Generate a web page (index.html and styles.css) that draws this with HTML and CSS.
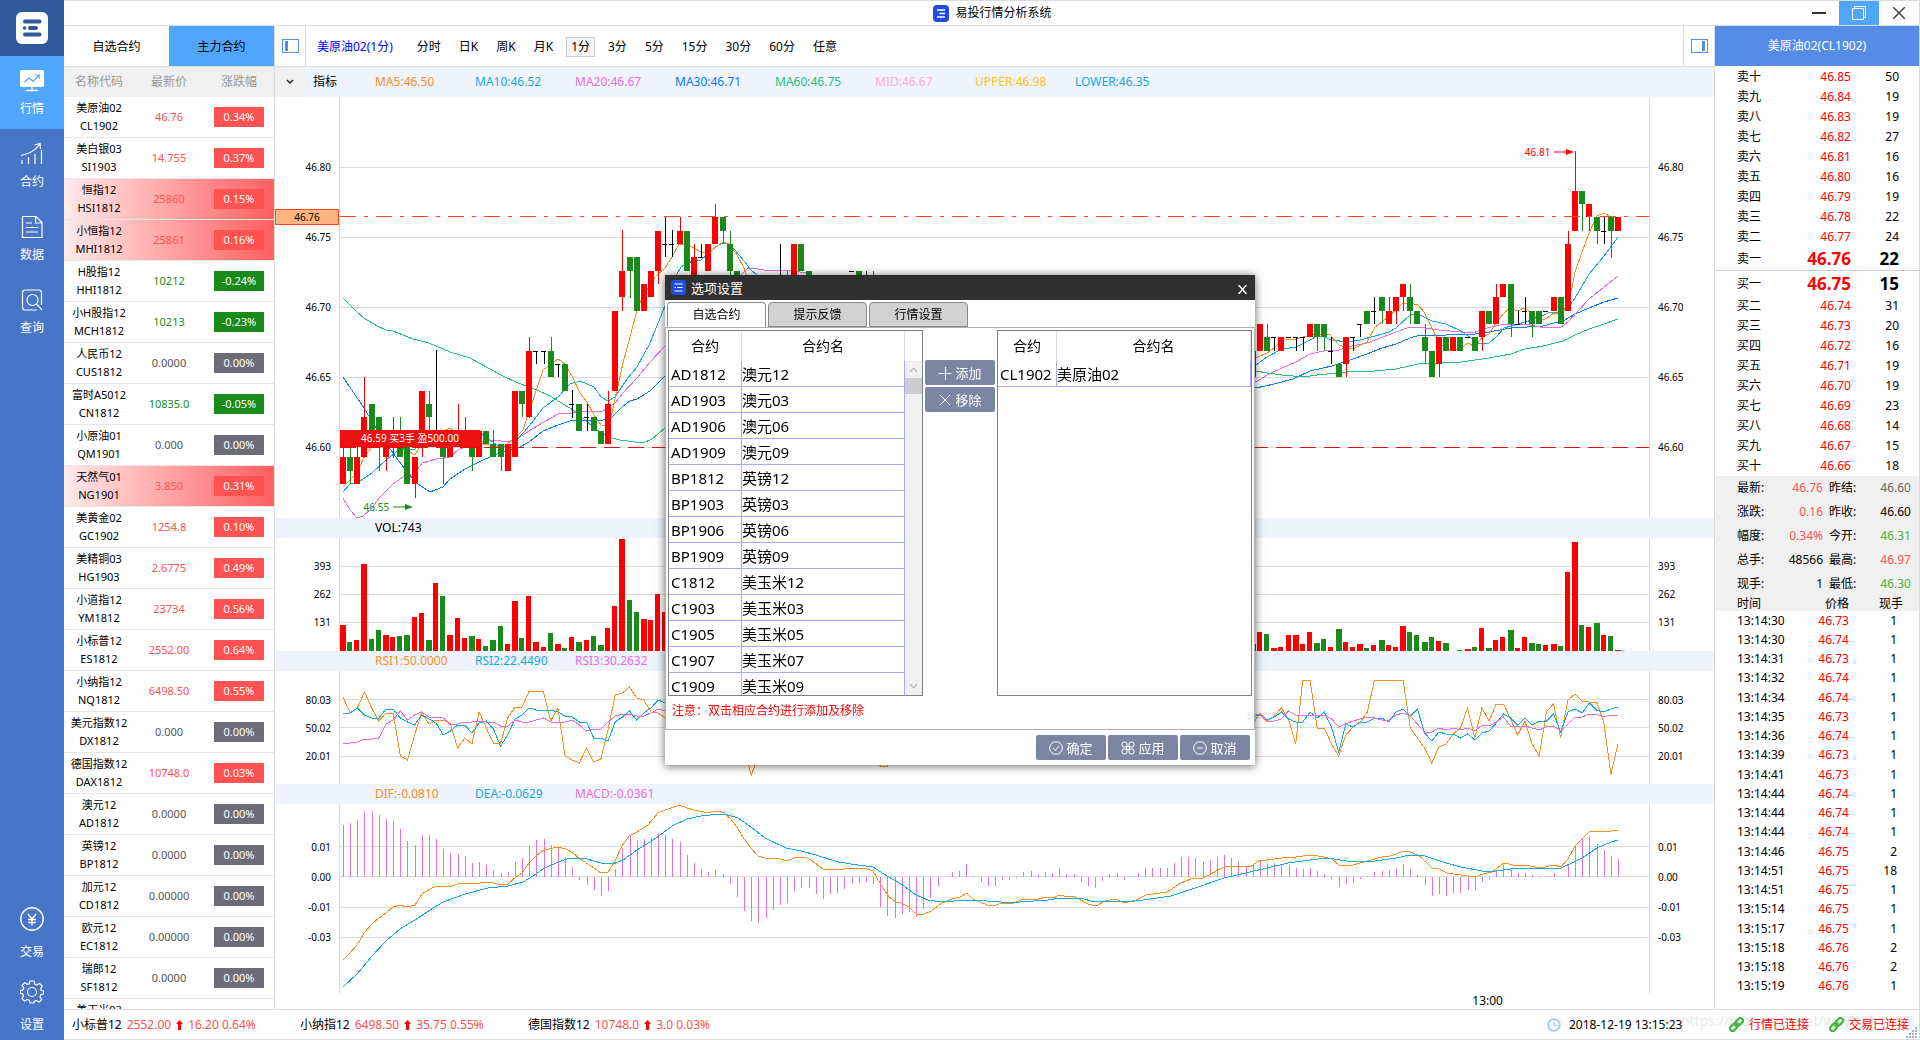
FILE: index.html
```html
<!DOCTYPE html>
<html lang="zh-CN">
<head>
<meta charset="utf-8">
<title>易投行情分析系统</title>
<link rel="stylesheet" href="styles.css">
</head>
<body>
<nav class="nav">
  <div class="nav-logo">
    <svg width="32" height="32" viewBox="0 0 32 32"><rect width="32" height="32" rx="6" fill="#fff"/><g stroke="#30589b" stroke-width="4" stroke-linecap="round"><path d="M9 9.500H23.500M14 16H20M9 22.500H23.500"/><path d="M8.500 16h.1" stroke-width="3.500"/></g></svg>
  </div>
  <a class="nav-item nav-item-active" href="#">
    <svg width="24" height="24" viewBox="0 0 24 24"><rect y="1" width="24" height="17" rx="1.500" fill="#fff"/><path d="M6 21.500h12M12 18v3" stroke="#fff" stroke-width="1.300"/><path d="M4.500 13l4.500-4 4 3.500 6-6M15 6h4.200v4" fill="none" stroke="#50a6fd" stroke-width="1.100"/></svg>
    行情</a>
  <a class="nav-item" href="#">
    <svg width="24" height="24" viewBox="0 0 24 24" fill="none" stroke="#fff" stroke-width="1.200"><path d="M2 18v4M8.500 15v7M15 12v10M21.500 8v14M1 13.500C9 12 15 9 19.500 2.500M14.500 3l5.500-1.500.5 5.500"/></svg>
    合约</a>
  <a class="nav-item" href="#">
    <svg width="24" height="24" viewBox="0 0 24 24" fill="none" stroke="#fff" stroke-width="1.200"><path d="M2.500 1.500H16l6 6v15H2.500zM15.500 1.500v6.500H22M6 8h6M6 12.500h12M6 17h12"/></svg>
    数据</a>
  <a class="nav-item" href="#">
    <svg width="24" height="24" viewBox="0 0 24 24" fill="none" stroke="#fff" stroke-width="1.200"><path d="M17 22H5a2.500 2.500 0 0 1-2.500-2.500v-15A2.500 2.500 0 0 1 5 2h14a2.500 2.500 0 0 1 2.500 2.500V17"/><circle cx="12.500" cy="12" r="5.500"/><path d="M16.500 16l5.500 6"/></svg>
    查询</a>
  <div class="nav-bottom">
    <a class="nav-item" href="#">
      <svg width="24" height="24" viewBox="0 0 24 24" fill="none" stroke="#fff" stroke-width="1.400"><circle cx="12" cy="12" r="11.200"/><path d="M8 7l4 5 4-5M12 12v6.500M8 12.500h8M8 15.500h8"/></svg>
      交易</a>
    <a class="nav-item" href="#">
      <svg width="24" height="24" viewBox="0 0 24 24" fill="none" stroke="#fff" stroke-width="1.200"><circle cx="12" cy="12" r="4.500"/><path d="M10 1h4l.7 3.100 2.100.9 2.700-1.700 2.800 2.800L20.500 9l.7 1.500 2.300.500v3l-2.700.700-.8 2.100 1.700 2.700-2.600 2.600-2.900-1.600-1.900.8L13.700 23h-3.500l-.8-2.700-2.200-.8-2.700 1.600-2.600-2.600L3.500 16l-.8-2.100L.500 13.500v-3l2.500-.7.8-1.900L2 5.300l2.700-2.700L7.500 4.400l1.800-.8z" stroke-linejoin="round"/></svg>
      设置</a>
  </div>
</nav>

<div class="app">
  <header class="titlebar">
    <h1 class="app-title">
      <svg width="16" height="17" viewBox="0 0 16 17"><rect width="16" height="17" rx="4" fill="#1d4ee0"/><path d="M4 5h8M6.500 8.500h5.500M4 12h8" stroke="#fff" stroke-width="1.600"/></svg>
      易投行情分析系统</h1>
    <div class="window-buttons">
      <button class="window-button" aria-label="最小化"><svg width="14" height="14"><path d="M0 7h14" stroke="#333" stroke-width="2"/></svg></button>
      <button class="window-button window-button-active" aria-label="还原"><svg width="14" height="14" fill="none" stroke="#fff"><path d="M.500 2.500h11v11H.500zM2.500 2.500v-2h11v11h-2"/></svg></button>
      <button class="window-button" aria-label="关闭"><svg width="12" height="12"><path d="M0 0l12 12M12 0L0 12" stroke="#444" stroke-width="1.500"/></svg></button>
    </div>
  </header>

  <main class="workspace">
    <section class="watchlist">
      <div class="list-tabs">
        <button class="list-tab">自选合约</button>
        <button class="list-tab list-tab-active">主力合约</button>
      </div>
      <table class="list-table">
        <thead><tr><th>名称代码</th><th>最新价</th><th>涨跌幅</th></tr></thead>
        <tbody id="contracts"></tbody>
      </table>
    </section>

    <section class="charts">
      <div class="toolbar">
        <button class="panel-toggle" aria-label="左侧面板"><svg width="17" height="14"><rect x=".5" y=".5" width="16" height="13" fill="none" stroke="#568ce8"/><rect x="3" y="2" width="3" height="10" fill="#568ce8"/></svg></button>
        <div class="periods">
          <strong class="period-name">美原油02(1分)</strong>
          <button class="period">分时</button><button class="period">日K</button><button class="period">周K</button><button class="period">月K</button><button class="period period-active">1分</button><button class="period">3分</button><button class="period">5分</button><button class="period">15分</button><button class="period">30分</button><button class="period">60分</button><button class="period">任意</button>
        </div>
        <button class="panel-toggle panel-toggle-right" aria-label="右侧面板"><svg width="17" height="14"><rect x=".5" y=".5" width="16" height="13" fill="none" stroke="#568ce8"/><rect x="11" y="2" width="3" height="10" fill="#568ce8"/></svg></button>
      </div>
      <div class="indicators">
        <button class="indicator-menu" aria-label="指标菜单"><svg width="8" height="6"><path d="M1 1l3 3 3-3" fill="none" stroke="#222" stroke-width="1.500"/></svg></button>
        <span class="indicator-label">指标</span>
        <span class="legend c-orange">MA5:46.50</span><span class="legend c-cyan">MA10:46.52</span><span class="legend c-pink">MA20:46.67</span><span class="legend c-blue">MA30:46.71</span><span class="legend c-green">MA60:46.75</span><span class="legend c-rose">MID:46.67</span><span class="legend c-gold">UPPER:46.98</span><span class="legend c-cyan">LOWER:46.35</span>
      </div>
      <div class="pane pane-price">
        <div class="scale scale-left"><span>46.80</span><span>46.75</span><span>46.70</span><span>46.65</span><span>46.60</span></div>
        <div class="plot">
          <svg id="price" viewBox="0 0 1309 421" preserveAspectRatio="none"></svg>
          <span class="position-flag">46.59 买3手 盈500.00</span>
          <span class="mark mark-low">46.55<svg width="20" height="6"><path d="M0 3h14" stroke="#1a8a1a"/><path d="M12 0l8 3-8 3z" fill="#1a8a1a"/></svg></span>
          <span class="mark mark-high">46.81<svg width="20" height="6"><path d="M0 3h14" stroke="#f00"/><path d="M12 0l8 3-8 3z" fill="#f00"/></svg></span>
        </div>
        <div class="scale scale-right"><span>46.80</span><span>46.75</span><span>46.70</span><span>46.65</span><span>46.60</span></div>
        <span class="price-tag">46.76</span>
      </div>
      <div class="band"><span class="legend">VOL:743</span></div>
      <div class="pane pane-volume">
        <div class="scale scale-left"><span>393</span><span>262</span><span>131</span></div>
        <div class="plot"><svg id="volume" viewBox="0 0 1309 113" preserveAspectRatio="none"></svg></div>
        <div class="scale scale-right"><span>393</span><span>262</span><span>131</span></div>
      </div>
      <div class="band"><span class="legend c-orange">RSI1:50.0000</span><span class="legend c-cyan">RSI2:22.4490</span><span class="legend c-pink">RSI3:30.2632</span></div>
      <div class="pane pane-rsi">
        <div class="scale scale-left"><span>80.03</span><span>50.02</span><span>20.01</span></div>
        <div class="plot"><svg id="rsi" viewBox="0 0 1309 113" preserveAspectRatio="none"></svg></div>
        <div class="scale scale-right"><span>80.03</span><span>50.02</span><span>20.01</span></div>
      </div>
      <div class="band"><span class="legend c-orange">DIF:-0.0810</span><span class="legend c-cyan">DEA:-0.0629</span><span class="legend c-pink">MACD:-0.0361</span></div>
      <div class="pane pane-macd">
        <div class="scale scale-left"><span>0.01</span><span>0.00</span><span>-0.01</span><span>-0.03</span></div>
        <div class="plot"><svg id="macd" viewBox="0 0 1309 189" preserveAspectRatio="none"></svg></div>
        <div class="scale scale-right"><span>0.01</span><span>0.00</span><span>-0.01</span><span>-0.03</span></div>
      </div>
      <div class="time-axis"><span class="time-label">13:00</span></div>
    </section>

    <aside class="quote">
      <h2 class="quote-title">美原油02(CL1902)</h2>
      <table class="depth"><tbody id="asks"></tbody></table>
      <table class="depth depth-bids"><tbody id="bids"></tbody></table>
      <table class="stats"><tbody>
        <tr><th>最新:</th><td class="c-up">46.76</td><th>昨结:</th><td class="c-gray">46.60</td></tr>
        <tr><th>涨跌:</th><td class="c-up">0.16</td><th>昨收:</th><td>46.60</td></tr>
        <tr><th>幅度:</th><td class="c-up">0.34%</td><th>今开:</th><td class="c-down">46.31</td></tr>
        <tr><th>总手:</th><td>48566</td><th>最高:</th><td class="c-up">46.97</td></tr>
        <tr><th>现手:</th><td>1</td><th>最低:</th><td class="c-down">46.30</td></tr>
      </tbody></table>
      <table class="ticks">
        <thead><tr><th>时间</th><th>价格</th><th>现手</th></tr></thead>
        <tbody id="ticks"></tbody>
      </table>
    </aside>
  </main>

  <footer class="statusbar">
    <span class="ticker">小标普12 <span class="c-up">2552.00</span><svg width="7" height="10"><path d="M3.500 0L7 4H5v6H2V4H0z" fill="#f00"/></svg><span class="c-up">16.20 0.64%</span></span>
    <span class="ticker">小纳指12 <span class="c-up">6498.50</span><svg width="7" height="10"><path d="M3.500 0L7 4H5v6H2V4H0z" fill="#f00"/></svg><span class="c-up">35.75 0.55%</span></span>
    <span class="ticker">德国指数12 <span class="c-up">10748.0</span><svg width="7" height="10"><path d="M3.500 0L7 4H5v6H2V4H0z" fill="#f00"/></svg><span class="c-up">3.0 0.03%</span></span>
    <span class="clock"><svg width="14" height="14" fill="none" stroke="#a9c8f5" stroke-width="2"><circle cx="7" cy="7" r="5.800"/><path d="M7 3.500V7.500h3.500" stroke-width="1.500"/></svg><time>2018-12-19 13:15:23</time></span>
    <span class="link-state"><svg width="15" height="15" viewBox="0 0 15 15" fill="none" stroke="#3fb83a" stroke-width="2.200"><g transform="rotate(-45 7.500 7.500)"><rect x="-.5" y="5" width="8" height="5" rx="2"/><rect x="7.500" y="5" width="8" height="5" rx="2"/><path d="M4.500 7.500h6" stroke-width="1.500"/></g></svg>行情已连接</span>
    <span class="link-state link-state-last"><svg width="15" height="15" viewBox="0 0 15 15" fill="none" stroke="#3fb83a" stroke-width="2.200"><g transform="rotate(-45 7.500 7.500)"><rect x="-.5" y="5" width="8" height="5" rx="2"/><rect x="7.500" y="5" width="8" height="5" rx="2"/><path d="M4.500 7.500h6" stroke-width="1.500"/></g></svg>交易已连接</span>
    <span class="watermark">https://blog.csdn.net/wuyinshou88</span>
    <svg class="grip" width="12" height="12" fill="#a4b0c4"><path d="M9 0h2v2H9zM6 3h2v2H6zM9 3h2v2H9zM3 6h2v2H3zM6 6h2v2H6zM9 6h2v2H9zM0 9h2v2H0zM3 9h2v2H3zM6 9h2v2H6zM9 9h2v2H9z"/></svg>
  </footer>
</div>

<dialog class="dialog" open>
  <div class="dialog-title">
    <svg width="15" height="15" viewBox="0 0 15 15"><rect width="15" height="15" rx="3" fill="#1d4ee0"/><path d="M3.500 4h8M6 7.500h5.500M3.500 7.500h1.500M3.500 11h8" stroke="#fff" stroke-width="1.200"/></svg>
    <span>选项设置</span>
    <button class="dialog-close" aria-label="关闭"><svg width="9" height="9"><path d="M.500 0l8 9M8.500 0l-8 9" stroke="#fff" stroke-width="1.500"/></svg></button>
  </div>
  <div class="dialog-tabs">
    <button class="dialog-tab dialog-tab-active">自选合约</button><button class="dialog-tab">提示反馈</button><button class="dialog-tab">行情设置</button>
  </div>
  <div class="dialog-body">
    <div class="transfer">
      <div class="pick-box">
        <table class="pick"><thead><tr><th class="pick-code">合约</th><th>合约名</th></tr></thead><tbody id="available"></tbody></table>
        <div class="scrollbar"><svg width="9" height="6"><path d="M1 5l3.500-4L8 5" fill="none" stroke="#999"/></svg><div class="scroll-thumb"></div><svg class="scroll-down" width="9" height="6"><path d="M1 1l3.500 4L8 1" fill="none" stroke="#999"/></svg></div>
      </div>
      <div class="transfer-buttons">
        <button class="action"><svg width="14" height="14" fill="none" stroke="#fff"><path d="M.500 7.500h13M7.500 1v13"/></svg>添加</button>
        <button class="action"><svg width="14" height="14" fill="none" stroke="#fff"><path d="M2 2l10 10M12 2L2 12"/></svg>移除</button>
      </div>
      <div class="pick-box">
        <table class="pick"><thead><tr><th class="pick-code-narrow">合约</th><th>合约名</th></tr></thead><tbody><tr><td>CL1902</td><td>美原油02</td></tr></tbody></table>
      </div>
    </div>
    <p class="note">注意：双击相应合约进行添加及移除</p>
  </div>
  <div class="dialog-footer">
    <button class="action"><svg width="14" height="14" fill="none" stroke="#fff"><circle cx="7" cy="7" r="6.300"/><path d="M4 7l2.300 2.500L10 5"/></svg>确定</button>
    <button class="action"><svg width="14" height="14" fill="none" stroke="#fff"><rect x="1" y="1" width="5" height="5" rx="2"/><rect x="8" y="1" width="5" height="5" rx="2"/><rect x="1" y="8" width="5" height="5" rx="2"/><rect x="8" y="8" width="5" height="5" rx="2"/><path d="M5.500 5.500h3v3h-3z"/></svg>应用</button>
    <button class="action"><svg width="14" height="14" fill="none" stroke="#fff"><circle cx="7" cy="7" r="6.300"/><path d="M4 7h6"/></svg>取消</button>
  </div>
</dialog>
<script src="script.js"></script>
</body>
</html>
```
FILE: styles.css
```css
* { box-sizing: border-box; }
body {
  margin: 0;
  height: 100vh;
  display: flex;
  overflow: hidden;
  background: #fff;
  color: #000;
  font: 12px/16px "Noto Sans", "Noto Sans CJK SC", sans-serif;
}
button { margin: 0; padding: 0; border: 0; background: none; color: inherit; font: inherit; }
table { border-collapse: separate; border-spacing: 0; table-layout: fixed; width: 100%; }
th, td { padding: 0; font-weight: normal; }
svg { display: block; flex: none; }
h1, h2, p { margin: 0; font-size: 12px; font-weight: normal; }

.c-orange { color: #f88f1f; }
.c-cyan { color: #16a9de; }
.c-pink { color: #e66fdb; }
.c-blue { color: #0a7cf0; }
.c-green { color: #22bf80; }
.c-rose { color: #ffaecb; }
.c-gold { color: #fcc419; }
.c-up { color: #ff5252; }
.c-down { color: #46b23c; }
.c-gray { color: #666; }

/* left navigation */
.nav { width: 64px; flex: none; display: flex; flex-direction: column; background: #4776c9; }
.nav-logo { height: 56px; flex: none; display: flex; align-items: center; justify-content: center; background: #30589b; }
.nav-item {
  height: 73px; flex: none;
  display: flex; flex-direction: column; align-items: center; gap: 8px;
  padding-top: 13px;
  color: #fff; text-decoration: none;
}
.nav-item-active { background: #50a6fd; }
.nav-bottom { margin-top: auto; }
.nav-bottom .nav-item { gap: 13px; }

.app { flex: 1; min-width: 0; display: flex; flex-direction: column; border-top: 1px solid #dcdcdc; border-right: 1px solid #dcdcdc; border-bottom: 1px solid #dcdcdc; }

.titlebar { height: 25px; flex: none; display: grid; grid-template-columns: 1fr auto 1fr; border-bottom: 1px solid #dcdcdc; }
.app-title { grid-column: 2; display: flex; align-items: center; gap: 6px; padding-left: 2px; }
.window-buttons { display: flex; justify-content: flex-end; }
.window-button { width: 40px; display: flex; align-items: center; justify-content: center; }
.window-button-active { background: #50a6fd; }

.workspace { flex: 1; min-height: 0; display: flex; }

/* contract list */
.watchlist { width: 211px; flex: none; overflow: hidden; border-right: 1px solid #dcdcdc; }
.list-tabs { display: flex; height: 41px; border-bottom: 1px solid #dcdcdc; }
.list-tab { flex: 1; padding-top: 1px; }
.list-tab-active { background: #50a6fd; }
.list-table { text-align: center; font-size: 11px; line-height: 18px; }
.list-table th { height: 30px; background: #f0f0f0; color: #999; font-size: 12px; }
.list-table td { height: 41px; border-bottom: 1px solid #e6e6e6; }
.list-table .row-hot { background: linear-gradient(90deg, #ffeaea, #ff5f5f); }
.badge { display: block; width: 50px; margin: 0 auto; line-height: 20px; color: #fff; }
.badge-up { background: #ff5252; }
.badge-down { background: #1a8a1a; }
.badge-flat { background: #6d6d78; }
.price-up { color: #ff5252; }
.price-down { color: #1a8a1a; }
.price-flat { color: #555; }

/* charts */
.charts { flex: 1; min-width: 0; display: flex; flex-direction: column; }
.toolbar { height: 41px; flex: none; display: flex; border-bottom: 1px solid #dcdcdc; }
.panel-toggle { width: 31px; flex: none; display: flex; align-items: center; justify-content: center; border-right: 1px solid #dcdcdc; }
.panel-toggle-right { border-right: 0; border-left: 1px solid #dcdcdc; }
.periods { flex: 1; display: flex; align-items: center; gap: 8px; padding: 1px 0 0 11px; }
.period-name { margin-right: 11px; color: #00f; font-weight: normal; }
.period { padding: 1px 4px; border: 1px solid transparent; }
.period-active { border-color: #ccc; background: #f5f5f5; }
.indicators { height: 30px; flex: none; display: flex; align-items: center; background: #eef3fc; }
.indicator-menu { width: 30px; height: 30px; display: flex; align-items: center; justify-content: center; background: #f0f0f0; }
.indicator-label { width: 70px; padding-left: 8px; }
.legend { width: 100px; flex: none; white-space: nowrap; }
.band { height: 20px; flex: none; display: flex; align-items: center; padding-left: 100px; background: #eef3fc; }

.pane { position: relative; display: flex; min-height: 0; }
.pane-price { flex: 421 1 0; }
.pane-volume { flex: 113 1 0; }
.pane-rsi { flex: 113 1 0; }
.pane-macd { flex: 189 1 0; }
.plot { position: relative; flex: 1; min-width: 0; border-left: 1px solid #d8d8d8; border-right: 1px solid #d8d8d8; }
.plot > svg { width: 100%; height: 100%; shape-rendering: crispEdges; }
.scale { width: 64px; flex: none; display: grid; align-items: center; font-size: 10px; line-height: 12px; }
.scale::before { content: ""; }
.scale-left { padding-right: 8px; text-align: right; }
.scale-right { padding-left: 8px; }
.pane-price .scale { grid-template-rows: 35fr repeat(5, 70fr) 36fr; }
.pane-volume .scale { grid-template-rows: 14fr repeat(3, 28fr) 15fr; }
.pane-rsi .scale { grid-template-rows: 15fr repeat(3, 28fr) 14fr; }
.pane-macd .scale { grid-template-rows: 28fr repeat(4, 30fr) 41fr; }

.price-tag { position: absolute; left: 0; top: 26.5%; width: 64px; border: 1px solid #ff4719; background: #feb582; text-align: center; font-size: 10px; line-height: 14px; }
.position-flag { position: absolute; left: 0; top: 79%; width: 140px; height: 17px; background: #ee1111; color: #fff; text-align: center; font-size: 10px; line-height: 17px; white-space: nowrap; }
.mark { position: absolute; display: flex; align-items: center; gap: 4px; font-size: 10px; line-height: 12px; }
.mark-low { left: 1.8%; top: 96%; color: #1a8a1a; }
.mark-high { right: 5.7%; top: 11.6%; color: #f00; }
.time-axis { position: relative; height: 16px; flex: none; margin: 0 65px; }
.time-label { position: absolute; left: 86.5%; top: 0; }

/* quote panel */
.quote { width: 205px; flex: none; display: flex; flex-direction: column; border-left: 1px solid #dcdcdc; overflow: hidden; }
.quote-title { height: 40px; flex: none; margin-bottom: 1px; background: #568ce8; color: #fff; text-align: center; line-height: 40px; }
.depth td { height: 20px; text-align: right; }
.depth td:first-child { width: 60px; padding-left: 22px; text-align: left; }
.depth td:nth-child(2) { width: 76px; color: #f00; }
.depth td:last-child { padding-right: 20px; }
.depth .depth-best td { height: 23px; font-size: 17px; line-height: 20px; font-weight: bold; }
.depth .depth-best td:first-child { font-size: 12px; font-weight: normal; }
.depth-bids { border-top: 1px solid #ccc; }
.depth-bids .depth-best td { height: 25px; }
.stats { background: #f0f0f0; }
.stats th, .stats td { height: 24px; text-align: right; }
.stats th { width: 54px; padding-left: 22px; text-align: left; }
.stats td { width: 54px; }
.stats th:nth-child(3) { width: 36px; padding-left: 6px; }
.stats td:last-child { width: auto; padding-right: 8px; }
.ticks { height: 400px; }
.ticks th { height: 15px; background: #f0f0f0; line-height: 14px; }
.ticks th, .ticks td { text-align: right; }
.ticks th:first-child, .ticks td:first-child { width: 80px; padding-left: 22px; text-align: left; }
.ticks th:nth-child(2), .ticks td:nth-child(2) { width: 56px; padding-right: 2px; }
.ticks th:last-child { padding-right: 16px; }
.ticks td:nth-child(2) { color: #f00; }
.ticks td:last-child { padding-right: 22px; }

/* status bar */
.statusbar { position: relative; height: 30px; flex: none; display: flex; align-items: center; padding-left: 8px; border-top: 1px solid #dcdcdc; }
.ticker { width: 228px; display: flex; align-items: center; gap: 5px; white-space: nowrap; }
.clock { margin-left: auto; width: 182px; display: flex; align-items: center; gap: 8px; }
.link-state { width: 100px; display: flex; align-items: center; gap: 5px; color: #f00; }
.link-state-last { width: 90px; }
.watermark { position: absolute; right: 8px; top: 2px; color: rgba(120, 120, 120, .2); font-size: 14px; line-height: 18px; }
.grip { position: absolute; right: 1px; bottom: 0; }

/* options dialog */
.dialog {
  position: fixed; inset: 0; margin: auto;
  width: 590px; height: 490px; padding: 0; border: 0;
  display: flex; flex-direction: column;
  background: #fff; color: #000;
  box-shadow: 0 1px 9px rgba(0, 0, 0, .6);
}
.dialog-title { height: 25px; flex: none; display: flex; align-items: center; gap: 5px; padding: 0 8px 0 6px; background: #303030; color: #fff; font-size: 13px; }
.dialog-close { margin-left: auto; padding-top: 4px; }
.dialog-tabs { display: flex; gap: 2px; padding: 2px 2px 0; }
.dialog-tab { width: 99px; height: 25px; border: 1px solid #888; border-radius: 4px 4px 0 0; background: #d2d2d2; }
.dialog-tab-active { border-bottom: 0; background: #fff; }
.dialog-body { height: 403px; flex: none; padding: 2px; border: 1px solid #b0b0b0; }
.transfer { display: grid; grid-template-columns: 1fr 70px 1fr; gap: 2px; height: 366px; }
.pick-box { display: flex; overflow: hidden; border: 1px solid #808080; }
.pick { align-self: flex-start; font-size: 15px; line-height: 20px; }
.pick th { height: 30px; border-right: 1px solid #ddd; font-size: 14px; }
.pick .pick-code { width: 73px; }
.pick .pick-code-narrow { width: 59px; }
.pick td { height: 26px; border-right: 1px solid #a9a9fb; border-bottom: 1px solid #a9a9fb; white-space: nowrap; }
.pick td:first-child { padding-left: 2px; }
.scrollbar { width: 17px; flex: none; display: flex; flex-direction: column; align-items: center; margin-top: 30px; padding: 6px 0; background: #f0f0f0; }
.scroll-thumb { width: 17px; height: 16px; margin-top: 5px; background: #cdcdcd; }
.scroll-down { margin-top: auto; }
.transfer-buttons { display: flex; flex-direction: column; gap: 2px; padding-top: 30px; }
.action { width: 70px; height: 25px; display: flex; align-items: center; justify-content: center; gap: 3px; border-radius: 2px; background: #7b87a2; color: #fff; font-size: 13px; }
.note { padding: 7px 4px; color: #f00; }
.dialog-footer { display: flex; justify-content: flex-end; gap: 2px; padding: 5px; }
```
FILE: script.js
```js
const RED = '#ff0000', GREEN = '#1a8a1a', BLACK = '#000000';
const STEP = 7.163, FIRST = 3, WIDTH = 1309;
const xAt = i => FIRST + i * STEP;

const hline = (y, attrs) => `<path d="M0 ${y}H${WIDTH}" fill="none" ${attrs}/>`;
const grid = ys => ys.map(y => hline(y, 'stroke="#dcdcdc"')).join('');
const rect = (x, y, w, h, c) => `<rect x="${Math.round(x)}" y="${y}" width="${w}" height="${h}" fill="${c}"/>`;
const poly = (pts, c) => `<polyline points="${pts}" fill="none" stroke="${c}"/>`;
const series = (parts, c) => poly(parts.flatMap(([start, ys]) => ys.map((y, k) => `${xAt(start + k).toFixed(1)},${y}`)).join(' '), c);

/* candles: colour, body top, body bottom, wick top, wick bottom */
const candles = [
  [0, 'R360 387 350 387|G360 374 350 387|R360 387 350 387|R320 360 280 361|G307 334|G320 350 320 374|R334 360 334 374|R334 347 320 361|G334 360 320 360|G347 387|R360 387 360 401|R294 347 294 360|G307 320 294 334|B334 334 253 334|G334 360 334 387|R334 360|R334 347 307 347|R334 347 320 347|G334 360 334 374|R334 360|G334 347|G347 360 333 360|G347 360 347 374|R347 374|R294 360|G294 307 294 320|R254 320 240 321|B254 254 254 267|B254 254 254 267|G254 280 240 280|B267 267 267 280|G267 294|B307 307 293 321|G307 334|B320 320 307 334|G320 334|G334 347|R307 347 294 347|R214 294|R174 200 133 214|G160 174 160 201|G160 214|R187 214|R174 200|R134 174 134 187|B147 147 120 160|B147 147 133 160|R134 147 120 147|G134 174|R160 200 147 200|B160 160 147 160|R147 174|R120 147 107 147|G120 134 120 147|G147 174 134 190|G174 190'],
  [61, 'B187 187 147 200|G187 200 174 200|R147 190|G147 174|G174 190'],
  [71, 'B174 174|G174 190|B187 187 174 200|G187 200 174 200'],
  [127, 'R254 280|R227 254|G240 254 227 254|B240 240 240 254|R240 254|B240 240|B240 240 240 254|B240 240 240 254|R227 240|G227 240 227 254|G227 240 227 254|B254 254 240 267|G267 280|R240 267 240 280|B240 240 240 254|B227 227 227 240|G214 227|B214 214 200 227|G200 214 200 227|R214 227 200 227|R200 214 200 227|R187 200 187 214|G200 214 187 227|G214 227|G240 254 227 267|G254 280|R240 267 240 280|G240 254|R240 254|G240 254|B240 240|G240 254|R214 240 214 254|G214 227|R200 227 187 227|R187 200|G187 227 187 240|B227 227 214 227|B214 214 200 227|G214 227 214 240|G214 227|B214 214|R200 214|G200 227|R147 214 134 214|R94 134 54 134|G94 107 94 134|R107 120 107 134|G120 134 120 147|B134 134 120 147|G120 134 120 161|R120 134']
];
const colours = { R: RED, G: GREEN, B: BLACK };
const drawCandles = candles.map(([start, text]) => text.split('|').map((item, k) => {
  const c = colours[item[0]];
  const [top, bottom, wickTop, wickBottom] = item.slice(1).split(' ').map(Number);
  const x = xAt(start + k);
  const body = rect(x - 3, top, item[0] === 'B' ? 5 : 6, Math.max(bottom - top, 1), c);
  return body + (wickTop === undefined ? '' : rect(x, wickTop, 1, wickBottom - wickTop, c));
}).join('')).join('');

const averages =
  poly('3,201 10,208 17,215 24,221 37,229 46,233 53,234 73,242 89,246 110,255 130,261 148,271 163,279 178,286 197,293 210,299 225,308 233,313 242,320 254,331 268,340 280,343 303,346 312,342 325,331 600,280 916,274 927,276 942,278 963,280 977,278 1006,275 1035,274 1056,272 1078,267 1099,266 1121,265 1149,261 1171,257 1185,252 1203,249 1223,244 1235,238 1249,232 1264,227 1278,222', '#22bf80') +
  poly('3,280 24,311 39,336 53,356 67,375 78,387 90,395 103,390 110,382 125,372 143,363 157,357 178,351 189,345 203,334 218,328 230,324 263,323 272,320 282,310 290,304 297,302 310,294 325,279 450,220 700,260 916,291 934,287 953,282 970,274 992,269 1013,262 1027,257 1042,251 1056,247 1070,241 1080,238 1092,239 1121,237 1135,237 1149,235 1171,231 1203,229 1214,226 1223,224 1235,217 1249,211 1264,205 1278,201', '#0a7cf0') +
  poly('3,401 10,413 17,421 23,419 32,411 39,401 53,387 63,380 75,376 82,366 96,362 110,360 118,353 137,345 153,343 168,345 178,341 197,329 218,317 233,316 247,314 263,314 275,306 283,296 297,281 310,265 325,249 402,177 407,172 412,171 430,174 447,173 466,176 471,178 700,260 916,285 927,278 942,271 956,265 970,257 984,254 999,253 1007,250 1027,246 1043,240 1056,235 1070,230 1085,231 1099,233 1121,235 1133,236 1143,232 1164,227 1185,227 1200,230 1221,230 1228,225 1249,202 1278,179', '#e66fdb') +
  poly('3,395 10,387 17,386 32,376 46,363 60,352 75,352 87,343 110,335 143,338 157,348 168,350 177,343 190,328 203,311 218,300 230,287 240,284 254,290 261,300 268,304 275,300 287,282 297,270 310,246 325,209 337,177 341,170 347,166 354,164 361,163 369,156 375,150 383,146 388,147 395,153 404,164 411,173 417,178 600,260 916,268 927,260 942,252 956,250 970,243 977,239 984,240 992,243 1007,245 1020,243 1035,239 1049,235 1056,231 1070,218 1078,217 1092,224 1106,227 1121,234 1138,246 1149,246 1156,240 1164,231 1178,227 1192,223 1200,220 1210,215 1220,215 1230,208 1235,201 1249,177 1264,159 1278,140', '#16a9de') +
  poly('3,390 17,376 24,360 32,350 63,351 75,358 82,346 103,334 110,331 118,336 130,345 163,350 175,341 183,333 193,303 203,273 218,262 225,267 233,281 240,296 247,305 254,318 261,328 267,329 272,316 277,293 283,266 290,240 297,213 302,201 315,180 325,171 332,160 339,147 347,148 354,151 361,155 369,155 375,151 383,145 389,147 397,158 404,171 407,180 600,260 916,261 927,256 934,251 942,243 956,242 963,240 971,238 977,237 990,238 999,248 1007,251 1013,252 1027,245 1035,230 1042,225 1056,213 1063,206 1070,206 1078,208 1084,215 1092,231 1099,246 1107,252 1120,252 1128,246 1135,250 1142,240 1149,237 1156,226 1164,216 1170,211 1177,214 1185,211 1193,218 1200,224 1207,221 1214,216 1221,217 1226,210 1232,191 1235,175 1242,155 1249,136 1257,119 1264,116 1271,120 1275,125 1278,125', '#f88f1f');

document.getElementById('price').innerHTML =
  grid([70.5, 140.5, 210.5, 280.5, 350.5]) + averages + drawCandles +
  hline(119.5, 'stroke="#ff4719" stroke-dasharray="16 8 4 8"') +
  hline(350.5, 'stroke="#e01010" stroke-dasharray="16 8"');

/* volume bars: colour and height */
const volumes = [
  [0, 'R26 G9 R11 R87 G12 G21 R16 R14 G15 G16 R34 R38 G11 R68 G55 R16 R33 R13 G15 R12 G5 G11 G25 R7 R50 G13 R55 R9 R4 G18 R7 G3 R14 G9 R11 G15 G6 R23 R45 R112 G51 G39 R32 R31 R57 R39'],
  [127, 'R7 R19 G17 R3 R4 R16 R16 R7 R19 G8 G12 R4 G22 R9 R4 R7 G3 R6 G11 R6 R4 R25 G19 G16 G9 G14 R10 G8 G0 G1 R2 G4 R23 G3 R11 R14 G21 R3 R14 G8 G7 R6 R7 G5 R79 R109 G26 R24 G28 R16 G15 R1']
];
document.getElementById('volume').innerHTML = grid([28.5, 56.5, 84.5]) +
  volumes.map(([start, text]) => text.split(' ').map((v, k) => {
    const h = Number(v.slice(1));
    return rect(xAt(start + k) - 3, 113 - h, 5 + (k % 3 === 0), h, colours[v[0]]);
  }).join('')).join('');

document.getElementById('rsi').innerHTML = grid([28.5, 56.5, 85.5]) +
  series([[0, [26,42,37,21,37,50,42,42,85,89,64,41,53,49,49,53,77,67,73,41,57,72,72,47,36,36,20,20,21,50,37,85,89,92,77,91,88,59,24,22,16,27,29,41,42,47]], [56, [80,104,85]], [74, [80,95,95,80]], [127, [53,42,50,45,37,48,73,9,9,57,57,73,85,64,56,51,41,9,9,9,9,9,57,67,77,92,76,73,63,57,37,67,37,50,33,33,48,64,50,73,85,41,33,67,29,23,30,31,31,51,103,73]]], '#f88f1f') +
  series([[0, [42,42,37,44,47,47,38,38,47,51,54,44,48,52,64,60,54,54,62,52,50,58,75,64,48,44,37,39,39,39,41,45,46,51,51,67,67,70,51,46,40,49,42,37,29,32]], [127, [46,44,49,46,41,48,51,51,41,47,41,56,81,53,56,51,51,47,47,51,41,38,45,38,62,70,61,63,63,67,63,69,62,60,52,43,47,54,47,54,50,50,43,61,41,38,42,32,39,41,38,36]]], '#16a9de') +
  series([[0, [73,72,71,68,68,67,53,49,40,49,44,41,46,46,47,54,53,51,51,50,51,51,55,55,49,51,51,49,47,51,51,51,49,54,60,58,58,51,45,43,43,45,45,42,38,40]], [127, [44,43,51,50,48,40,44,44,44,44,44,48,56,53,50,48,46,47,49,49,44,42,45,53,61,61,57,59,57,59,57,60,54,55,51,46,55,55,55,57,59,56,55,60,53,46,46,43,43,46,44,44]]], '#e66fdb');

const histogram = [52,54,57,66,66,62,58,56,48,36,32,42,42,38,28,24,23,21,14,15,12,7,4,5,15,19,31,37,38,32,29,20,10,-3,-8,-13,-19,-14,8,29,41,37,38,39,44,42,38,35,22,14,8,5,7,3,-7,-20,-34,-44,-46,-41,-33,-28,-26,-14,-11,-11,-17,-22,-17,-16,-12,-7,-6,-5,-7,-30,-39,-41,-37,-35,-40,-32,-21,-9,0,5,6,13,1,-5,-9,-9,-3,-3,-1,5,6,3,5,4,9,3,3,-5,-9,-11,-4,3,4,-3,1,4,9,9,9,9,14,20,20,19,15,17,20,22,19,16,10,12,17,14,14,12,12,9,8,9,6,3,-2,-10,-7,-6,-2,1,5,6,7,9,13,8,2,-8,-19,-17,-19,-16,-16,-13,-13,-5,-2,6,12,7,4,4,2,-1,1,4,0,13,31,38,40,33,27,21,18];
document.getElementById('macd').innerHTML = grid([42.5, 72.5, 103.5, 133.5]) +
  histogram.map((v, i) => rect(xAt(i), v > 0 ? 73 - v : 73, 1, Math.abs(v), '#e66fdb')).join('') +
  poly('3,156 10,149 17,141 24,129 32,120 39,114 46,109 53,103 60,101 67,103 75,101 82,90 90,85 97,82 110,83 117,80 125,79 132,80 148,78 162,81 168,80 176,73 182,69 189,59 197,51 204,46 218,43 226,45 233,49 240,55 254,64 261,69 268,68 275,57 282,42 289,32 297,28 308,21 318,9 325,6 340,1 347,4 354,6 369,9 373,7 380,7 384,9 391,15 397,23 404,35 411,44 418,52 425,54 440,55 447,57 454,54 465,53 471,56 483,65 491,65 498,66 504,65 513,64 527,65 533,67 537,74 543,84 549,93 556,98 561,99 569,103 576,110 584,110 591,107 602,99 612,95 620,93 627,89 633,95 647,101 654,102 661,99 671,100 684,95 698,95 705,93 712,94 720,91 724,92 735,93 748,100 756,102 765,97 776,95 784,99 796,96 806,91 827,88 841,79 851,75 863,74 884,63 899,62 910,63 920,56 927,56 942,54 956,53 971,51 984,53 992,55 999,61 1013,61 1027,57 1042,53 1050,52 1056,50 1063,47 1070,48 1078,51 1083,55 1092,64 1099,65 1107,69 1121,71 1135,73 1143,70 1152,68 1164,59 1178,62 1185,61 1200,64 1214,61 1221,63 1228,55 1235,42 1249,28 1271,27 1278,26', '#f88f1f') +
  poly('3,183 17,170 32,152 46,137 60,125 75,116 90,106 103,98 125,90 148,84 168,82 183,78 193,72 203,65 218,58 230,54 247,55 261,59 273,60 283,56 297,46 310,38 319,32 332,22 347,15 361,12 380,10 388,11 398,14 411,23 425,34 446,44 461,47 476,51 498,58 518,61 533,63 547,72 561,80 576,91 588,96 602,98 627,96 647,97 661,98 680,98 708,96 720,94 740,94 755,98 796,97 831,92 855,84 884,74 906,69 927,64 948,59 970,56 987,54 1007,57 1035,57 1056,54 1070,51 1085,52 1106,59 1121,63 1142,67 1156,67 1178,64 1221,64 1232,59 1242,54 1257,44 1271,38 1278,36', '#16a9de');

/* contract list: name, code, price, change, highlighted */
const contracts = `美原油02,CL1902,46.76,0.34%
美白银03,SI1903,14.755,0.37%
恒指12,HSI1812,25860,0.15%,hot
小恒指12,MHI1812,25861,0.16%,hot
H股指12,HHI1812,10212,-0.24%
小H股指12,MCH1812,10213,-0.23%
人民币12,CUS1812,0.0000,0.00%
富时A5012,CN1812,10835.0,-0.05%
小原油01,QM1901,0.000,0.00%
天然气01,NG1901,3.850,0.31%,hot
美黄金02,GC1902,1254.8,0.10%
美精铜03,HG1903,2.6775,0.49%
小道指12,YM1812,23734,0.56%
小标普12,ES1812,2552.00,0.64%
小纳指12,NQ1812,6498.50,0.55%
美元指数12,DX1812,0.000,0.00%
德国指数12,DAX1812,10748.0,0.03%
澳元12,AD1812,0.0000,0.00%
英镑12,BP1812,0.0000,0.00%
加元12,CD1812,0.00000,0.00%
欧元12,EC1812,0.00000,0.00%
瑞郎12,SF1812,0.0000,0.00%
美玉米03,C1903,0.00,0.00%`.split('\n').map(line => line.split(','));
document.getElementById('contracts').innerHTML = contracts.map(([name, code, price, change, hot]) => {
  const value = parseFloat(change);
  const trend = value > 0 ? 'up' : value < 0 ? 'down' : 'flat';
  return `<tr${hot ? ' class="row-hot"' : ''}><td>${name}<br>${code}</td><td class="price-${trend}">${price}</td><td><span class="badge badge-${trend}">${change}</span></td></tr>`;
}).join('');

const levels = ['一', '二', '三', '四', '五', '六', '七', '八', '九', '十'];
const depthRow = (side, n, price, size) =>
  `<tr${n === 0 ? ' class="depth-best"' : ''}><td>${side}${levels[n]}</td><td>${price.toFixed(2)}</td><td>${size}</td></tr>`;
document.getElementById('asks').innerHTML = [50, 19, 19, 27, 16, 16, 19, 22, 24, 22].map((s, k) => depthRow('卖', 9 - k, 46.85 - k / 100, s)).join('');
document.getElementById('bids').innerHTML = [15, 31, 20, 16, 19, 19, 23, 14, 15, 18].map((s, k) => depthRow('买', k, 46.75 - k / 100, s)).join('');

document.getElementById('ticks').innerHTML = '14:30 3 1|14:30 4 1|14:31 3 1|14:32 4 1|14:34 4 1|14:35 3 1|14:36 4 1|14:39 3 1|14:41 3 1|14:44 4 1|14:44 4 1|14:44 4 1|14:46 5 2|14:51 5 18|14:51 5 1|15:14 5 1|15:17 5 1|15:18 6 2|15:18 6 2|15:19 6 1'
  .split('|').map(row => row.split(' '))
  .map(([time, cent, size]) => `<tr><td>13:${time}</td><td>46.7${cent}</td><td>${size}</td></tr>`).join('');

document.getElementById('available').innerHTML = 'AD1812 澳元12,AD1903 澳元03,AD1906 澳元06,AD1909 澳元09,BP1812 英镑12,BP1903 英镑03,BP1906 英镑06,BP1909 英镑09,C1812 美玉米12,C1903 美玉米03,C1905 美玉米05,C1907 美玉米07,C1909 美玉米09'
  .split(',').map(row => row.split(' '))
  .map(([code, name]) => `<tr><td>${code}</td><td>${name}</td></tr>`).join('');
```
